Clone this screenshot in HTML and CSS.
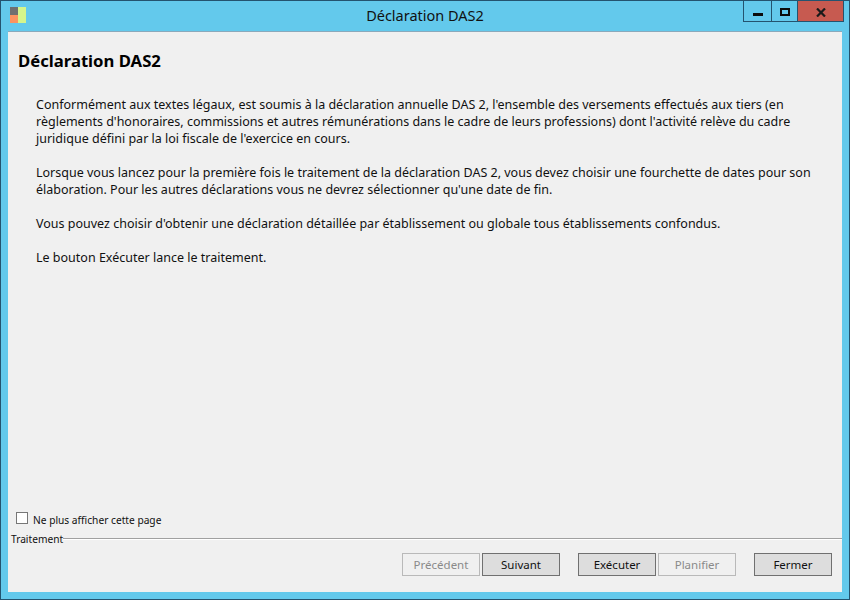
FILE: index.html
```html
<!DOCTYPE html>
<html lang="fr">
<head>
<meta charset="utf-8">
<title>Déclaration DAS2</title>
<link rel="stylesheet" href="styles.css">
</head>
<body>
<div class="window">
  <header class="titlebar">
    <svg class="app-icon" width="16" height="16" viewBox="0 0 16 16">
      <rect x="0" y="0" width="8" height="8" fill="#6f6f6f"/>
      <rect x="0" y="8" width="8" height="8" fill="#fb9360"/>
      <rect x="8" y="0" width="8" height="16" fill="#d4f58c"/>
    </svg>
    <div class="title">Déclaration DAS2</div>
    <div class="controls">
      <div class="ctl ctl-min"><span class="min-glyph"></span></div>
      <div class="ctl ctl-max"><span class="max-glyph"></span></div>
      <div class="ctl ctl-close"><svg class="close-glyph" width="10" height="9" viewBox="0 0 10 9"><path d="M1 0.5 L9 8.5 M9 0.5 L1 8.5" stroke="#1a1a1a" stroke-width="2.2" fill="none"/></svg></div>
    </div>
  </header>
  <main class="client">
    <h1 class="heading">Déclaration DAS2</h1>
    <div class="body-text">
      <p>Conformément aux textes légaux, est soumis à la déclaration annuelle DAS 2, l'ensemble des versements effectués aux tiers (en<br>règlements d'honoraires, commissions et autres rémunérations dans le cadre de leurs professions) dont l'activité relève du cadre<br>juridique défini par la loi fiscale de l'exercice en cours.</p>
      <p>Lorsque vous lancez pour la première fois le traitement de la déclaration DAS 2, vous devez choisir une fourchette de dates pour son<br>élaboration. Pour les autres déclarations vous ne devrez sélectionner qu'une date de fin.</p>
      <p>Vous pouvez choisir d'obtenir une déclaration détaillée par établissement ou globale tous établissements confondus.</p>
      <p>Le bouton Exécuter lance le traitement.</p>
    </div>
    <label class="check-row"><span class="checkbox"></span><span class="check-label">Ne plus afficher cette page</span></label>
    <div class="group-head"><span class="group-label">Traitement</span><span class="group-line"></span></div>
    <div class="buttons">
      <div class="btn disabled">Précédent</div>
      <div class="btn">Suivant</div>
      <div class="btn gap-left">Exécuter</div>
      <div class="btn disabled">Planifier</div>
      <div class="btn gap-left">Fermer</div>
    </div>
  </main>
</div>
</body>
</html>
```
FILE: styles.css
```css
* { box-sizing: border-box; }
html, body { margin: 0; padding: 0; }
body { width: 850px; height: 600px; overflow: hidden; font-family: "Noto Sans", "Open Sans", sans-serif; color: #000; }
.window { width: 850px; height: 600px; background: #63c9ec; border: 1px solid #24536f; display: flex; flex-direction: column; }
.titlebar { height: 30px; flex: none; display: flex; align-items: flex-start; position: relative; }
.app-icon { margin: 6px 0 0 9px; flex: none; }
.title { position: absolute; left: 0; right: 0; top: 5px; text-align: center; font-size: 14.5px; line-height: 18px; color: #111; }
.controls { position: absolute; top: 0; right: 5px; display: flex; height: 21px; border: 1px solid #24536f; border-top: none; }
.ctl { display: flex; align-items: flex-start; justify-content: center; height: 20px; }
.ctl-min { width: 28px; border-right: 1px solid #24536f; }
.ctl-max { width: 26px; border-right: 1px solid #24536f; }
.ctl-close { width: 45px; background: #c75a50; }
.min-glyph { width: 10px; height: 3px; background: #0c0c0c; margin-top: 12px; }
.max-glyph { width: 10px; height: 8px; border: 2px solid #0c0c0c; margin-top: 7px; }
.close-glyph { margin-top: 7px; }
.client { flex: 1; margin: 0 7px 7px 7px; background: #f0f0f0; border-top: 1px solid #8aa9bb; display: flex; flex-direction: column; }
.heading { margin: 18px 0 0 10px; font-size: 16.7px; line-height: 22px; font-weight: 700; color: #000; }
.body-text { flex: 1; margin: 24px 0 0 28px; font-size: 12.5px; line-height: 17px; color: #111; }
.body-text p { margin: 0 0 17px; white-space: nowrap; }
.check-row { display: flex; align-items: center; margin-left: 8px; height: 14px; padding-top: 1px; }
.checkbox { width: 12px; height: 12px; border: 1px solid #777; background: #fff; flex: none; margin-top: -3px; }
.check-label { margin-left: 5px; font-size: 10.2px; line-height: 14px; color: #111; }
.group-head { display: flex; align-items: center; margin: 6px 0 0 3px; height: 14px; }
.group-label { font-size: 10.2px; line-height: 14px; color: #111; }
.group-line { flex: 1; height: 2px; background: linear-gradient(#a0a0a0 50%, #fff 50%); margin-top: -1px; }
.buttons { display: flex; justify-content: flex-end; gap: 2px; margin: 7px 10px 16px 0; }
.btn { width: 78px; height: 23px; border: 1px solid #707070; background: #dddddd; font-size: 11.5px; line-height: 21px; text-align: center; color: #111; }
.btn.disabled { border-color: #b9b9b9; background: #f0f0f0; color: #8a8a8a; }
.btn.gap-left { margin-left: 16px; }
```
